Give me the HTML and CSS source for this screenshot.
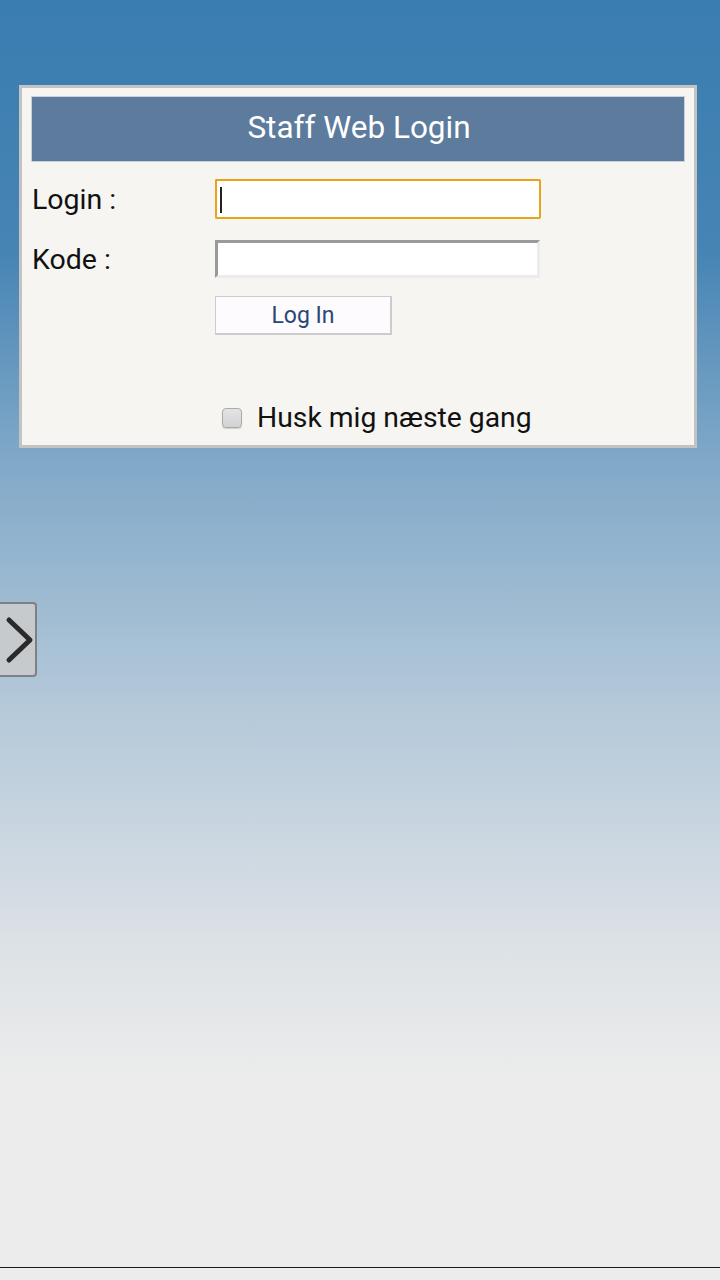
FILE: index.html
```html
<!DOCTYPE html>
<html>
<head>
<meta charset="utf-8">
<link rel="stylesheet" href="styles.css">
</head>
<body>
<div class="page">
  <div class="panel">
    <div class="header">Staff Web Login</div>
    <div class="row row-login">
      <label class="label">Login :</label>
      <div class="input focused"><span class="caret"></span></div>
    </div>
    <div class="row row-code">
      <label class="label">Kode :</label>
      <div class="input"></div>
    </div>
    <div class="row row-btn">
      <span class="label"></span>
      <div class="btn">Log In</div>
    </div>
    <div class="remember">
      <span class="checkbox"></span>
      <span class="remember-text">Husk mig næste gang</span>
    </div>
  </div>
  <div class="side-tab">
    <svg class="chev" width="37" height="71" viewBox="0 0 37 71"><path d="M9 16 L30 36 L9 56" fill="none" stroke="#2a2a2a" stroke-width="5" stroke-linecap="round" stroke-linejoin="round"/></svg>
  </div>
  <div class="bottom-line"></div>
</div>
</body>
</html>
```
FILE: styles.css
```css
html, body {
  margin: 0;
  padding: 0;
}
body {
  width: 720px;
  height: 1280px;
  overflow: hidden;
  font-family: Roboto, "Noto Sans", sans-serif;
  background: #ececec;
}
.page {
  position: relative;
  width: 720px;
  height: 1280px;
  padding-top: 85px;
  box-sizing: border-box;
  background: linear-gradient(to bottom, #3a7db0 0px, #4684b4 250px, #7ea7c7 450px, #b3c8d9 700px, #dde2e6 950px, #ececec 1080px, #ececec 1280px);
}
.panel {
  margin-left: 19px;
  width: 678px;
  height: 363px;
  box-sizing: border-box;
  border: 3px solid #c3c3c3;
  background: #f6f5f1;
  padding: 8px 9px 0 9px;
}
.header {
  height: 66px;
  box-sizing: border-box;
  background: #5d7b9d;
  border: 1px solid #c8d0d8;
  color: #ffffff;
  font-size: 31.5px;
  display: flex;
  align-items: center;
  justify-content: center;
  padding-left: 2px;
  padding-bottom: 3px;
}
.row {
  display: flex;
  align-items: center;
}
.row-login { margin-top: 17px; }
.row-code { margin-top: 21px; }
.row-btn { margin-top: 18px; }
.label {
  width: 183px;
  flex: none;
  padding-left: 1px;
  font-size: 28.5px;
  color: #111;
}
.input {
  width: 326px;
  height: 40px;
  box-sizing: border-box;
  background: #fff;
  border-top: 3px solid #9a9a9a;
  border-left: 3px solid #9a9a9a;
  border-right: 3px solid #ececec;
  border-bottom: 3px solid #ececec;
  position: relative;
}
.row-code .input { width: 325px; height: 38px; }
.input.focused {
  outline: 2px solid #e8a317;
  outline-offset: -2px;
  border-top: 2px solid #b0b0b0;
  border-left: 2px solid #b0b0b0;
  border-right: 2px solid #eee;
  border-bottom: 2px solid #eee;
  border-radius: 2px;
}
.caret {
  position: absolute;
  left: 3px;
  top: 6px;
  width: 2px;
  height: 26px;
  background: #222;
}
.btn {
  width: 177px;
  height: 39px;
  box-sizing: border-box;
  background: #fdfbfd;
  border: 2px solid #cccccc;
  border-width: 1px 2px 2px 1px;
  color: #284775;
  font-size: 23px;
  display: flex;
  align-items: center;
  justify-content: center;
}
.remember {
  display: flex;
  align-items: center;
  margin-top: 66px;
  padding-left: 191px;
}
.checkbox {
  width: 20px;
  height: 20px;
  box-sizing: border-box;
  border: 1px solid #a9a9a9;
  border-radius: 4px;
  background: linear-gradient(to bottom, #e4e4e4, #d2d2d2);
  box-shadow: 0 1px 1px rgba(0,0,0,0.15);
}
.remember-text {
  margin-left: 15px;
  font-size: 28.3px;
  color: #111;
}
.side-tab {
  position: absolute;
  left: -4px;
  top: 602px;
  width: 41px;
  height: 75px;
  box-sizing: border-box;
  border: 2px solid #7d8185;
  border-radius: 0 4px 4px 0;
  background: #c6cacd;
}
.chev {
  position: absolute;
  left: 2px;
  top: 0;
}
.bottom-line {
  position: absolute;
  left: 0;
  top: 1267px;
  width: 720px;
  height: 1px;
  background: #1a1a1a;
}
```
